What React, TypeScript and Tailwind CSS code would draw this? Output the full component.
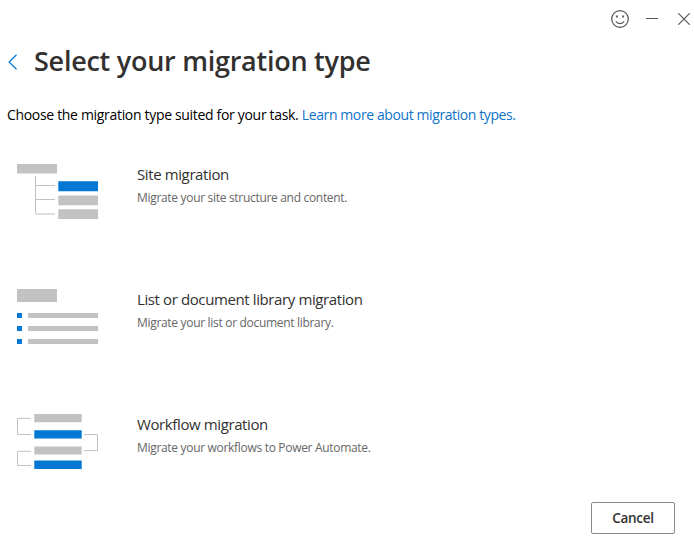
function SiteIcon() {
  return (
    <svg width="82" height="56" viewBox="0 0 82 56" className="shrink-0">
      <g fill="#c2c2c2">
        <path d="M0 0h40v9.6H0z" />
        <path d="M18 12h1v39h-1zM19 21h19v1H19zM19 35h19v1H19z" />
        <path d="M18 49h20v2H18z" fill="#dedede" />
        <path d="M41.3 31.6H81v9.7H41.3zM41.3 45.2H81V55H41.3z" />
      </g>
      <path d="M41.3 17.3H81v9.9H41.3z" fill="#0078d4" />
    </svg>
  );
}

function ListIcon() {
  return (
    <svg width="82" height="56" viewBox="0 0 82 56" className="shrink-0">
      <path d="M0 0h40v13H0zM11 24h70v5H11zM11 37h70v5H11zM11 50h70v5H11z" fill="#c2c2c2" />
      <path d="M0 24h5v5H0zM0 37h5v5H0zM0 50h5v5H0z" fill="#0078d4" />
    </svg>
  );
}

function WorkflowIcon() {
  return (
    <svg width="82" height="56" viewBox="0 0 82 56" className="shrink-0">
      <path d="M17.3 0h47.4v8.3H17.3zM17.3 32.4h47.4v8.2H17.3z" fill="#c2c2c2" />
      <path d="M17.3 16.3h47.4v8.3H17.3zM17.3 46.6h47.4V55H17.3z" fill="#0078d4" />
      <path d="M14 4.4H.5v16.1H14M67 20.5h13.5v16.1H67M14 37.3H.5v14.2H14" fill="none" stroke="#c2c2c2" />
    </svg>
  );
}

const options = [
  { title: "Site migration", detail: "Migrate your site structure and content.", Icon: SiteIcon },
  { title: "List or document library migration", detail: "Migrate your list or document library.", Icon: ListIcon },
  { title: "Workflow migration", detail: "Migrate your workflows to Power Automate.", Icon: WorkflowIcon },
];

export default function App() {
  return (
    <main className="flex h-[546px] w-[694px] flex-col overflow-hidden bg-white font-['Open_Sans',sans-serif] text-[#323130]">
      <div className="flex h-[38px] shrink-0 items-center justify-end pr-1">
        <button aria-label="Feedback" className="mr-[17px]">
          <svg width="18" height="18" viewBox="0 0 18 18" fill="none" stroke="#555">
            <circle cx="9" cy="9" r="8.3" strokeWidth="1.2" />
            <path d="M4.8 11.2c1.8 3.1 6.6 3.1 8.4 0" strokeWidth="1.2" />
            <path d="M5.1 6.5h1.8M11.1 6.5h1.8" strokeWidth="1.8" />
          </svg>
        </button>
        <button aria-label="Minimize" className="mr-[20px]">
          <svg width="12" height="12" viewBox="0 0 12 12" stroke="#555"><path d="M0 5.5h12" /></svg>
        </button>
        <button aria-label="Close">
          <svg width="12" height="12" viewBox="0 0 12 12" stroke="#555" strokeWidth="1.2"><path d="m.3.3 11.4 11.4M11.7.3.3 11.7" /></svg>
        </button>
      </div>
      <header className="flex h-12 shrink-0 items-center pl-2">
        <button aria-label="Back" className="mr-[17px]">
          <svg width="9" height="16" viewBox="0 0 9 16" fill="none" stroke="#0078d4" strokeWidth="1.2"><path d="M8.5.7 1.1 8l7.4 7.3" /></svg>
        </button>
        <h1 className="pb-0.5 text-[27px] leading-[46px] font-semibold tracking-[-0.26px] whitespace-nowrap">Select your migration type</h1>
      </header>
      <p className="mt-[19px] h-5 shrink-0 pl-[7px] text-[14px] leading-5 tracking-[-0.32px] whitespace-nowrap text-black">
        Choose the migration type suited for your task.{" "}
        <a className="tracking-[-0.4px] text-[#0f73c9]">Learn more about migration types.</a>
      </p>
      <div className="mt-[39px] flex flex-col pl-[17px]">
        {options.map(({ title, detail, Icon }) => (
          <section key={title} className="flex h-[125px] items-start gap-[38px]">
            <Icon />
            <div className="whitespace-nowrap">
              <h2 className="text-[15px] leading-5 tracking-[-0.39px]">{title}</h2>
              <p className="mt-[5px] text-[12px] leading-[18px] tracking-[-0.31px] text-[#666]">{detail}</p>
            </div>
          </section>
        ))}
      </div>
      <button className="-mt-[37px] mr-[19px] h-8 w-[84px] shrink-0 self-end rounded-[2px] border border-[#8a8886] text-[13.5px] leading-[30px] font-semibold tracking-[-0.3px]">Cancel</button>
    </main>
  );
}
